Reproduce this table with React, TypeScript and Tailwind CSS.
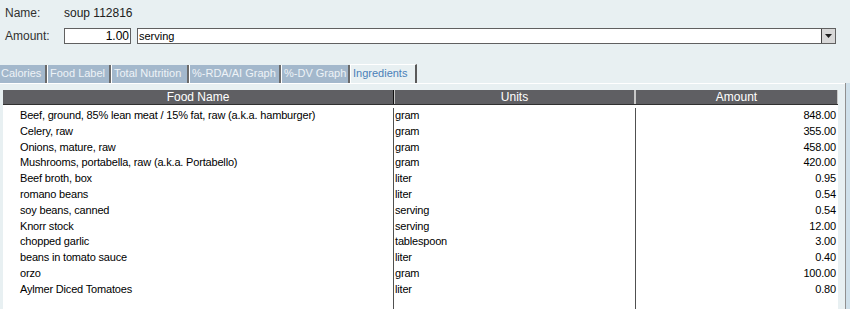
import React from "react";

const rows: [string, string, string][] = [
  ["Beef, ground, 85% lean meat / 15% fat, raw (a.k.a. hamburger)", "gram", "848.00"],
  ["Celery, raw", "gram", "355.00"],
  ["Onions, mature, raw", "gram", "458.00"],
  ["Mushrooms, portabella, raw (a.k.a. Portabello)", "gram", "420.00"],
  ["Beef broth, box", "liter", "0.95"],
  ["romano beans", "liter", "0.54"],
  ["soy beans, canned", "serving", "0.54"],
  ["Knorr stock", "serving", "12.00"],
  ["chopped garlic", "tablespoon", "3.00"],
  ["beans in tomato sauce", "liter", "0.40"],
  ["orzo", "gram", "100.00"],
  ["Aylmer Diced Tomatoes", "liter", "0.80"],
];

const tabs = [
  { label: "Calories", w: "w-[47px]" },
  { label: "Food Label", w: "w-[64px]" },
  { label: "Total Nutrition", w: "w-[78px]" },
  { label: "%-RDA/AI Graph", w: "w-[92px]" },
  { label: "%-DV Graph", w: "w-[69px]" },
];

export default function App() {
  return (
    <div className="w-[850px] h-[309px] overflow-hidden bg-[#e8f0f2] flex flex-col font-['Liberation_Sans',Arial,sans-serif] text-[#202020]">
      {/* Name */}
      <div className="flex items-center h-[14px] mt-[6px] text-[12px] leading-[14px]">
        <span className="w-[64px] pl-[5px] text-[#303030]">Name:</span>
        <span>soup 112816</span>
      </div>
      {/* Amount */}
      <div className="flex items-center h-[16px] mt-[8px] text-[12px]">
        <span className="w-[64px] pl-[5px] text-[#303030] leading-[14px]">Amount:</span>
        <div className="w-[67px] h-[16px] bg-white border border-[#606060] text-right pr-[1px] text-[12px] leading-[14px] text-black">
          1.00
        </div>
        <div className="ml-[6px] w-[699px] h-[16px] bg-white border border-[#606060] flex">
          <span className="flex-1 pl-[1px] text-[11px] leading-[14px] text-black">serving</span>
          <div className="w-[14px] h-full border-l border-[#404040] bg-[#d8d8d8] flex items-center justify-center">
            <svg width="7" height="4" viewBox="0 0 7 4">
              <path d="M0 0 H7 L3.5 4 Z" fill="#202020" />
            </svg>
          </div>
        </div>
      </div>
      {/* Tabs */}
      <div className="flex mt-[20px] h-[19px] items-end">
        {tabs.map((t, i) => (
          <div
            key={t.label}
            className={`${t.w} h-[18px] bg-[#a3b8cc] border-l ${i === 0 ? "border-l-[#a3b8cc] pl-0" : "border-l-white pl-[2px]"} border-r-2 border-r-[#6a6a6a] text-[#eef3f7] text-[11px] leading-[17px] whitespace-nowrap overflow-hidden`}
          >
            {t.label}
          </div>
        ))}
        <div className="w-[67px] h-[19px] bg-[#e8f0f2] border-l border-t border-white border-r-2 border-r-[#5a5a5a] text-[#4a80b8] text-[11px] leading-[17px] pl-[2px] whitespace-nowrap">
          Ingredients
        </div>
      </div>
      {/* Panel */}
      <div className="flex flex-1 min-h-0">
        <div className="w-[845px] border-t border-white flex flex-col pl-[3px] pt-[6px]">
          <div className="w-[835px] flex-1 flex flex-col bg-white">
            {/* Header */}
            <div className="flex h-[15px] bg-[#5f5f63] text-white text-[12px] leading-[14px] border-b border-[#303030]">
              <div className="w-[391px] text-center border-r border-[#101010]">Food Name</div>
              <div className="w-[241px] text-center border-l border-[#c8c8c8] border-r border-[#101010]">Units</div>
              <div className="flex-1 text-center border-l border-[#c8c8c8] border-r border-[#101010]">Amount</div>
            </div>
            {/* Body */}
            <div className="flex flex-1 pt-[3px] text-[11px] tracking-[-0.18px] leading-[15.8px] text-black">
              <div className="w-[391px] border-r border-[#505050] pl-[17px]">
                {rows.map((r) => (
                  <div key={r[0]} className="h-[15.8px] whitespace-nowrap">{r[0]}</div>
                ))}
              </div>
              <div className="w-[242px] border-r border-[#505050] pl-[1px]">
                {rows.map((r, i) => (
                  <div key={i} className="h-[15.8px]">{r[1]}</div>
                ))}
              </div>
              <div className="flex-1 pr-[2px] text-right">
                {rows.map((r, i) => (
                  <div key={i} className="h-[15.8px]">{r[2]}</div>
                ))}
              </div>
            </div>
          </div>
        </div>
        <div className="w-[1px] bg-[#909090]" />
        <div className="flex-1 bg-[#cfe0ea]" />
      </div>
    </div>
  );
}
